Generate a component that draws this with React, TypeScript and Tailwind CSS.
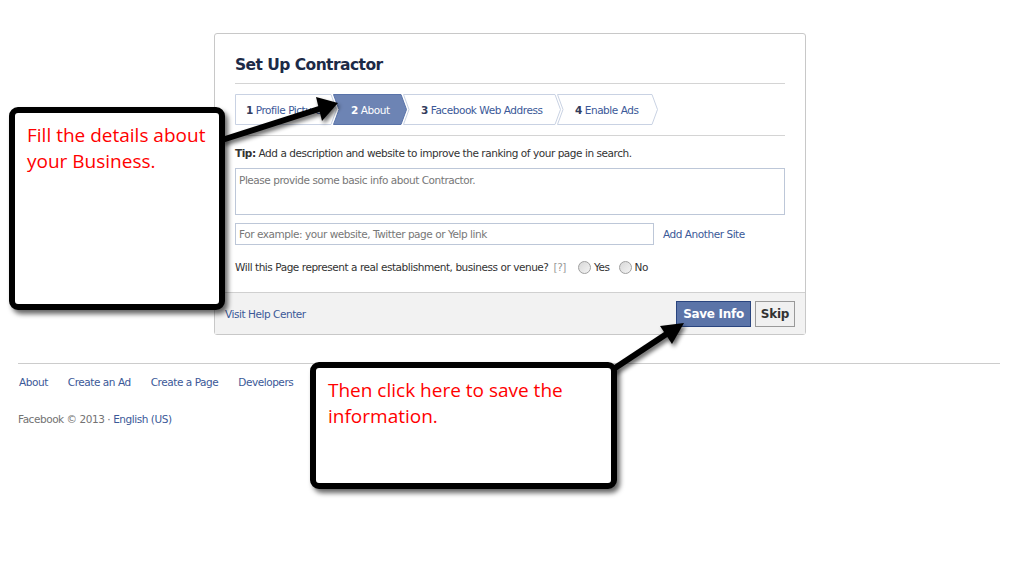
const steps = [
  { n: '1', label: 'Profile Picture', w: 102, first: true },
  { n: '2', label: 'About', w: 74, active: true },
  { n: '3', label: 'Facebook Web Address', w: 158 },
  { n: '4', label: 'Enable Ads', w: 101 },
]

function Step({ n, label, w, first, active }: { n: string; label: string; w: number; first?: boolean; active?: boolean }) {
  const h = 31
  const d = 6
  const pts = first
    ? `0.5,0.5 ${w - d},0.5 ${w - 0.5},${h / 2} ${w - d},${h - 0.5} 0.5,${h - 0.5}`
    : `0.5,0.5 ${w - d},0.5 ${w - 0.5},${h / 2} ${w - d},${h - 0.5} 0.5,${h - 0.5} ${d},${h / 2}`
  return (
    <div className={`relative flex h-[31px] shrink-0 items-center ${first ? 'pl-[11px]' : 'ml-[-4px] pl-[18px]'}`} style={{ width: w }}>
      <svg className="absolute inset-0" width={w} height={h}>
        <polygon points={pts} fill={active ? '#6d84b4' : '#ffffff'} stroke={active ? '#5973a9' : '#c9d2e3'} />
      </svg>
      <span className={`relative whitespace-nowrap ${active ? 'text-white' : 'text-[#3b5998]'}`}>
        <b className={active ? 'text-white' : 'text-[#333c5c]'}>{n}</b> {label}
      </span>
    </div>
  )
}

function Radio({ label }: { label: string }) {
  return (
    <span className="flex items-center gap-[3px]">
      <span className="h-[13px] w-[13px] rounded-full border border-[#a0a0a0] bg-gradient-to-br from-[#d8d8d8] to-[#f4f4f4]" />
      <span>{label}</span>
    </span>
  )
}

export default function App() {
  return (
    <div className="relative h-[564px] w-[1033px] overflow-hidden bg-white pt-[33px] text-[10.5px] leading-[14px] text-[#333] [font-family:'DejaVu_Sans',sans-serif] tracking-[-0.45px]">
      <div className="ml-[214px] w-[592px] rounded-[3px] border border-[#c8c8c8]">
        <div className="px-[20px]">
          <div className="border-b border-[#d4d4d4] pb-[8px] pt-[21px]">
            <h1 className="text-[15.5px] font-bold leading-[20px] tracking-[-0.55px] text-[#1c2a47]">Set Up Contractor</h1>
          </div>
          <div className="flex border-b border-[#d4d4d4] pb-[10px] pt-[10px]">
            {steps.map((s) => (
              <Step key={s.n} {...s} />
            ))}
          </div>
          <p className="mt-[10px]">
            <b>Tip:</b> Add a description and website to improve the ranking of your page in search.
          </p>
          <div className="mt-[8px] h-[47px] border border-[#bdc7d8] px-[3px] pt-[4px] text-[#777]">
            Please provide some basic info about Contractor.
          </div>
          <div className="mt-[8px] flex items-center">
            <div className="flex h-[22px] w-[419px] items-center border border-[#bdc7d8] px-[3px] text-[#777]">
              For example: your website, Twitter page or Yelp link
            </div>
            <span className="ml-[9px] text-[#3b5998]">Add Another Site</span>
          </div>
          <div className="mb-[18px] mt-[15px] flex items-center">
            <span>Will this Page represent a real establishment, business or venue?</span>
            <span className="ml-[5px] text-[#999]">[?]</span>
            <span className="ml-[12px]"><Radio label="Yes" /></span>
            <span className="ml-[9px]"><Radio label="No" /></span>
          </div>
        </div>
        <div className="flex h-[42px] items-center justify-between border-t border-[#d0d0d0] bg-[#f2f2f2] pl-[10px] pr-[10px]">
          <span className="text-[#3b5998]">Visit Help Center</span>
          <div className="flex gap-[4px]">
            <button className="h-[26px] border border-[#29447e] bg-[#5b74a8] px-[6px] text-[12px] font-bold tracking-[-0.3px] text-white">Save Info</button>
            <button className="h-[26px] border border-[#999] bg-[#f0f0f0] px-[5px] text-[12px] font-bold tracking-[-0.3px] text-[#333]">Skip</button>
          </div>
        </div>
      </div>

      <div className="ml-[18px] mt-[28px] w-[982px] border-t border-[#ccc]">
        <div className="mt-[11px] flex gap-[20px] pl-[1px] text-[#3b5998]">
          <span>About</span>
          <span>Create an Ad</span>
          <span>Create a Page</span>
          <span>Developers</span>
        </div>
        <p className="mt-[23px] text-[#737373]">
          Facebook © 2013 · <span className="text-[#3b5998]">English (US)</span>
        </p>
      </div>

      {/* annotations */}
      <svg className="pointer-events-none absolute left-0 top-0" width="1033" height="564">
        <defs>
          <filter id="sh" x="-20%" y="-20%" width="140%" height="140%">
            <feGaussianBlur in="SourceAlpha" stdDeviation="2" />
            <feOffset dx="2" dy="3" />
            <feComponentTransfer><feFuncA type="linear" slope="0.6" /></feComponentTransfer>
            <feMerge><feMergeNode /><feMergeNode in="SourceGraphic" /></feMerge>
          </filter>
        </defs>
        <g filter="url(#sh)">
          <line x1="222" y1="140" x2="322" y2="108" stroke="#000" strokeWidth="6" />
          <polygon points="338,103 316,97 322,121" fill="#000" />
          <line x1="612" y1="370" x2="668" y2="333" stroke="#000" strokeWidth="6" />
          <polygon points="684,323 660,326 672,344" fill="#000" />
        </g>
      </svg>
      <div className="absolute left-[9px] top-[107px] h-[203px] w-[216px] rounded-[9px] border-[6px] border-black bg-white px-[12px] pt-[9px] text-[19px] leading-[26px] tracking-[0px] text-[#f00] shadow-[3px_4px_5px_rgba(0,0,0,0.6)] [font-family:'Open_Sans',sans-serif]">
        Fill the details about your Business.
      </div>
      <div className="absolute left-[310px] top-[362px] h-[127px] w-[307px] rounded-[9px] border-[6px] border-black bg-white px-[12px] pt-[9px] text-[19px] leading-[26px] tracking-[0px] text-[#f00] shadow-[3px_4px_5px_rgba(0,0,0,0.6)] [font-family:'Open_Sans',sans-serif]">
        Then click here to save the information.
      </div>
    </div>
  )
}
